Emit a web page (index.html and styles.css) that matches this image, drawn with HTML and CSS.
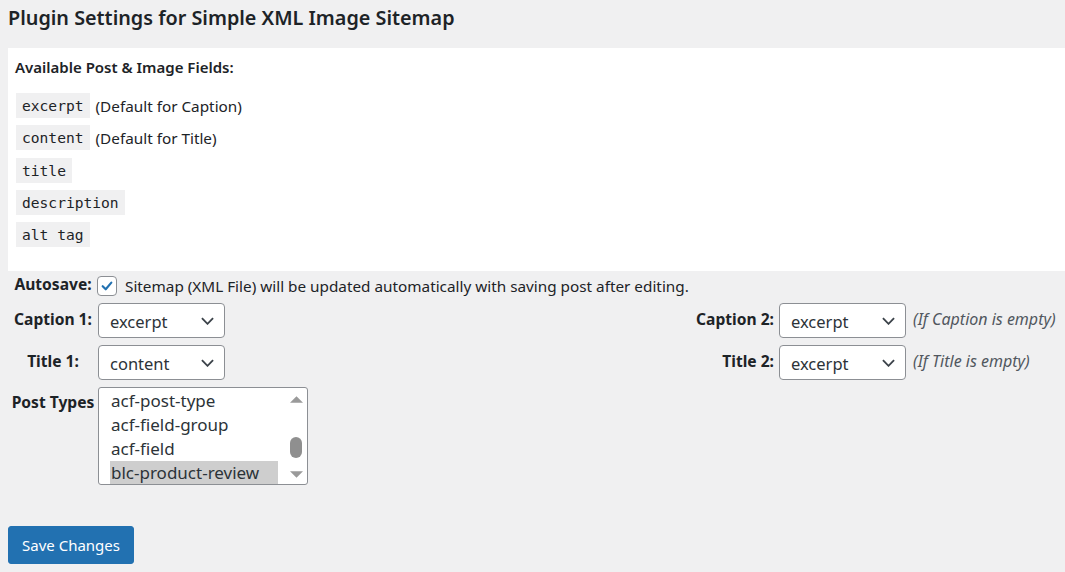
FILE: index.html
```html
<!DOCTYPE html>
<html lang="en">
<head>
<meta charset="utf-8">
<title>Plugin Settings</title>
<link rel="stylesheet" href="styles.css">
</head>
<body>
<div class="wrap">
  <h2 class="page-title">Plugin Settings for Simple XML Image Sitemap</h2>

  <div class="fields">
    <p class="fields-title">Available Post &amp; Image Fields:</p>
    <ul class="field-list">
      <li><code>excerpt</code> <span>(Default for Caption)</span></li>
      <li><code>content</code> <span>(Default for Title)</span></li>
      <li><code>title</code></li>
      <li><code>description</code></li>
      <li><code>alt tag</code></li>
    </ul>
  </div>

  <div class="form-grid">
    <div class="lbl lbl-left">Autosave:</div>
    <div class="autosave">
      <span class="checkbox">
        <svg viewBox="0 0 20 20" width="20" height="20"><path d="M5.2 10.2 L8.6 13.6 L14.8 6.2" fill="none" stroke="#2271b1" stroke-width="2.4" stroke-linecap="round" stroke-linejoin="round"/></svg>
      </span>
      <span class="autosave-text">Sitemap (XML File) will be updated automatically with saving post after editing.</span>
    </div>

    <div class="lbl lbl-left">Caption 1:</div>
    <div class="select"><span>excerpt</span><svg viewBox="0 0 14 8" width="13" height="8"><path d="M1 1 L7 7 L13 1" fill="none" stroke="#3c434a" stroke-width="2"/></svg></div>
    <div class="spacer"></div>
    <div class="lbl lbl-right">Caption 2:</div>
    <div class="select"><span>excerpt</span><svg viewBox="0 0 14 8" width="13" height="8"><path d="M1 1 L7 7 L13 1" fill="none" stroke="#3c434a" stroke-width="2"/></svg></div>
    <div class="note">(If Caption is empty)</div>

    <div class="lbl lbl-left">Title 1:</div>
    <div class="select"><span>content</span><svg viewBox="0 0 14 8" width="13" height="8"><path d="M1 1 L7 7 L13 1" fill="none" stroke="#3c434a" stroke-width="2"/></svg></div>
    <div class="spacer"></div>
    <div class="lbl lbl-right">Title 2:</div>
    <div class="select"><span>excerpt</span><svg viewBox="0 0 14 8" width="13" height="8"><path d="M1 1 L7 7 L13 1" fill="none" stroke="#3c434a" stroke-width="2"/></svg></div>
    <div class="note">(If Title is empty)</div>

    <div class="lbl lbl-left lbl-top">Post Types</div>
    <div class="listbox" role="listbox">
      <ul class="options">
        <li>acf-post-type</li>
        <li>acf-field-group</li>
        <li>acf-field</li>
        <li class="selected">blc-product-review</li>
      </ul>
      <div class="scrollbar">
        <svg class="arrow" viewBox="0 0 14 8" width="13" height="8"><path d="M0 8 L7 1 L14 8 Z" fill="#9a9a9a"/></svg>
        <div class="track"><div class="thumb"></div></div>
        <svg class="arrow" viewBox="0 0 14 8" width="13" height="8"><path d="M0 0 L7 7 L14 0 Z" fill="#9a9a9a"/></svg>
      </div>
    </div>
  </div>

  <button class="button-primary" type="button">Save Changes</button>
</div>
</body>
</html>
```

FILE: styles.css
```css
html, body {
  margin: 0;
  padding: 0;
  background: #f0f0f1;
}

body {
  font-family: "Noto Sans", "Open Sans", sans-serif;
  font-size: 15.3px;
  color: #1d2327;
}

.wrap {
  padding: 0 0 0 8px;
}

.page-title {
  margin: 0;
  padding-top: 4px;
  font-size: 19.8px;
  font-weight: 600;
  line-height: 27px;
  color: #1d2327;
}

.fields {
  margin-top: 17px;
  background: #fff;
  padding: 8px 7px 24px;
}

.fields-title {
  margin: 0 0 15px;
  font-size: 15px;
  font-weight: 600;
  line-height: 22px;
}

.field-list {
  list-style: none;
  margin: 0;
  padding: 0 0 0 1px;
  display: flex;
  flex-direction: column;
  gap: 7.25px;
}

.field-list li {
  display: flex;
  align-items: center;
  gap: 6px;
  height: 25px;
}

.field-list code {
  font-family: "DejaVu Sans Mono", "Liberation Mono", monospace;
  font-size: 14.6px;
  background: #f0f0f1;
  padding: 0 6px;
  height: 25px;
  line-height: 25px;
  color: #1d2327;
}

.form-grid {
  display: grid;
  grid-template-columns: 90px 127px 463px 91px 127px 1fr;
  grid-template-rows: 21px 35px 35px 98px;
  row-gap: 7px;
  margin-top: 4px;
  align-items: center;
}

.lbl {
  font-weight: 700;
  font-size: 15.6px;
  line-height: 20px;
}

.lbl-left {
  text-align: center;
  margin-top: -3px;
}

.lbl-right {
  text-align: right;
  padding-right: 5px;
  margin-top: -3px;
}

.lbl-top {
  align-self: start;
  margin-top: 5px;
}

.autosave {
  grid-column: 2 / 7;
  display: flex;
  align-items: center;
  gap: 8px;
  margin-left: -1px;
}

.checkbox {
  width: 18px;
  height: 18px;
  border: 1px solid #8c8f94;
  border-radius: 4px;
  background: #fff;
  display: flex;
  align-items: center;
  justify-content: center;
}

.checkbox svg {
  width: 18px;
  height: 18px;
}

.autosave-text {
  line-height: 20px;
}

.select {
  box-sizing: border-box;
  height: 35px;
  border: 1px solid #8c8f94;
  border-radius: 4px;
  background: #fff;
  display: flex;
  align-items: center;
  justify-content: space-between;
  padding: 2px 10px 0 11px;
  font-size: 16.5px;
  color: #2c3338;
}

.select svg {
  margin-top: -2px;
}

.note {
  padding-left: 7px;
  font-style: italic;
  font-size: 16px;
  color: #50575e;
  margin-top: -3px;
}

.listbox {
  box-sizing: border-box;
  grid-column: 2 / 4;
  width: 210px;
  height: 98px;
  align-self: start;
  border: 1px solid #8c8f94;
  border-radius: 3px;
  background: #fff;
  display: flex;
  overflow: hidden;
}

.options {
  list-style: none;
  margin: 0 7px 0 0;
  padding: 0 0 0 11px;
  flex: 1;
  font-size: 17px;
  color: #2c3338;
}

.options li {
  height: 24px;
  line-height: 24px;
  padding-left: 1px;
}

.options li.selected {
  background: #cecece;
}

.options li:first-child {
  margin-top: 1px;
}

.scrollbar {
  width: 22px;
  display: flex;
  flex-direction: column;
  align-items: center;
  padding: 7px 0 5px;
  box-sizing: border-box;
}

.scrollbar .arrow {
  flex: none;
}

.track {
  flex: 1;
  width: 100%;
  display: flex;
  justify-content: center;
  align-items: flex-end;
  padding-bottom: 13px;
}

.thumb {
  width: 12px;
  height: 21px;
  border-radius: 6px;
  background: #8f8f8f;
}

.button-primary {
  margin-top: 41px;
  width: 126px;
  height: 38px;
  background: #2271b1;
  border: 1px solid #2271b1;
  border-radius: 3px;
  color: #fff;
  font-family: "Noto Sans", "Open Sans", sans-serif;
  font-size: 15px;
  padding: 0;
  cursor: pointer;
}
```
